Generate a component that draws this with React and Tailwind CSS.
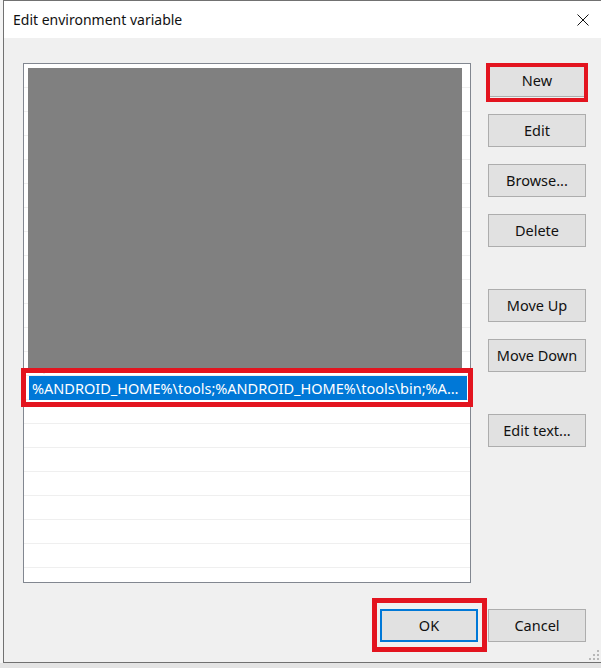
import React from "react";

const rows = [
  "%USERPROFILE%\\AppData\\Local\\Microsoft\\WindowsApps;C:\\Program Files\\Java\\jdk\\bin",
  "C:\\Program Files\\nodejs\\",
  "C:\\Users\\user\\AppData\\Roaming\\npm",
  "C:\\Program Files\\Git\\cmd",
  "C:\\Python39\\Scripts\\",
  "C:\\Python39\\",
  "C:\\Windows\\system32",
  "C:\\Windows",
  "C:\\Windows\\System32\\Wbem",
  "C:\\Windows\\System32\\WindowsPowerShell\\v1.0\\;C:\\Windows\\System32\\OpenSSH\\",
  "C:\\Program Files\\dotnet\\",
  "C:\\Gradle\\bin",
  "%JAVA_HOME%\\bin",
];

function Btn({ children, className = "" }) {
  return (
    <div
      className={
        "w-[98px] h-[33px] flex items-center justify-center bg-[#e1e1e1] border border-[#adadad] text-[14.5px] text-[#111] " +
        className
      }
    >
      {children}
    </div>
  );
}

export default function App() {
  const total = 22;
  return (
    <div className="relative w-[601px] h-[668px] overflow-hidden bg-[#e4e4e4] font-['Noto_Sans',sans-serif]">
      <div className="flex h-[663px]">
        <div className="w-[3px] bg-[#f4f4f4]" />
        <div className="flex-1 flex flex-col border-l border-t border-b border-[#717171]">
          <div className="h-[37px] bg-white flex items-center justify-between pl-[9px] pr-[12px]">
            <span className="text-[14px] text-[#111]">Edit environment variable</span>
            <svg width="12" height="12" viewBox="0 0 12 12">
              <path d="M0.5 0.5 L11.5 11.5 M11.5 0.5 L0.5 11.5" stroke="#111" strokeWidth="1" />
            </svg>
          </div>
          <div className="relative flex-1 bg-[#f0f0f0] pl-[19px] pt-[25px] flex flex-col">
            <div className="flex">
              <div className="relative w-[448px] h-[520px] border border-[#828790] bg-white overflow-hidden">
                {Array.from({ length: total }).map((_, i) => (
                  <div key={i} className="h-[24px] border-b border-[#efefef] pl-[5px] pr-[3px]">
                    {i === 13 ? (
                      <div className="h-[24px] bg-[#0078d7] text-white text-[14.5px] leading-[24px] pl-[3px] pr-[2px] truncate">
                        %ANDROID_HOME%\tools;%ANDROID_HOME%\tools\bin;%ANDROID_HOME%\platform-tools
                      </div>
                    ) : i < 13 ? (
                      <div className="h-[24px] text-black text-[14.5px] leading-[24px] pl-[3px] pr-[2px] truncate">
                        {rows[i]}
                      </div>
                    ) : null}
                  </div>
                ))}
                <div className="absolute left-[4px] top-[4px] w-[434px] h-[301px] bg-[#808080]" />
              </div>
              <div className="ml-[17px] mt-[1px] flex flex-col">
                <Btn>New</Btn>
                <Btn className="mt-[17px]">Edit</Btn>
                <Btn className="mt-[17px]">Browse...</Btn>
                <Btn className="mt-[17px]">Delete</Btn>
                <Btn className="mt-[42px]">Move Up</Btn>
                <Btn className="mt-[17px]">Move Down</Btn>
                <Btn className="mt-[42px]">Edit text...</Btn>
              </div>
            </div>
            <div className="mt-[26px] flex justify-end gap-[10px] pr-[15px]">
              <Btn className="!border-2 !border-[#0078d7]">OK</Btn>
              <Btn>Cancel</Btn>
            </div>
            <svg className="absolute right-[2px] bottom-[2px]" width="10" height="10" viewBox="0 0 10 10">
              <rect x="8" y="0" width="2" height="2" fill="#b8b8b8" />
              <rect x="4" y="4" width="2" height="2" fill="#b8b8b8" />
              <rect x="8" y="4" width="2" height="2" fill="#b8b8b8" />
              <rect x="0" y="8" width="2" height="2" fill="#b8b8b8" />
              <rect x="4" y="8" width="2" height="2" fill="#b8b8b8" />
              <rect x="8" y="8" width="2" height="2" fill="#b8b8b8" />
            </svg>
          </div>
        </div>
      </div>
      <div className="absolute left-[486px] top-[63px] w-[102px] h-[39px] border-[4px] border-[#e3141f]" />
      <div className="absolute left-[21px] top-[368px] w-[452px] h-[39px] border-[5px] border-[#e3141f]" />
      <div className="absolute left-[372px] top-[598px] w-[115px] h-[54px] border-[5px] border-[#e3141f]" />
    </div>
  );
}
